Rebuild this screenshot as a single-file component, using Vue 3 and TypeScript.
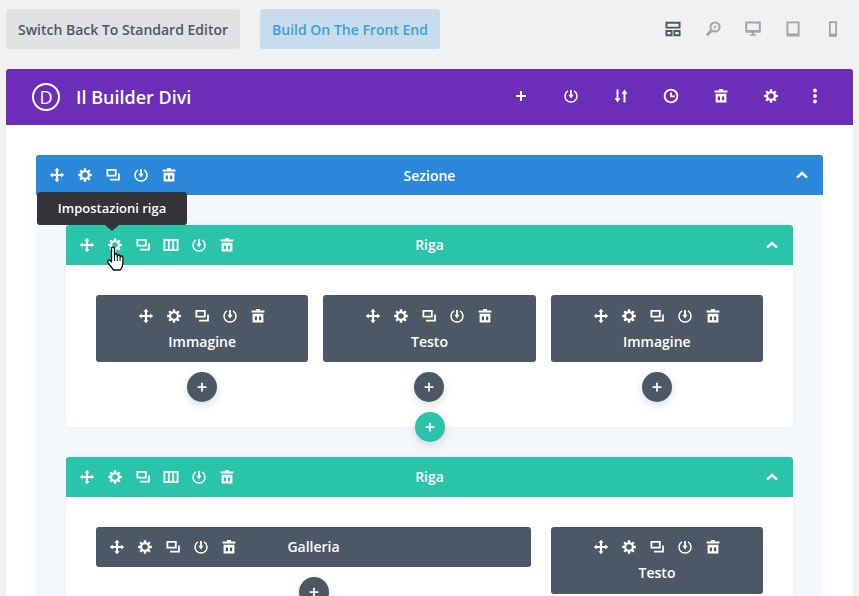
<script setup lang="ts">
import { h } from 'vue'
import type { FunctionalComponent } from 'vue'

function gearPath(): string {
  const pts: string[] = []
  const teeth = 8
  for (let i = 0; i < teeth; i++) {
    const a = (i / teeth) * Math.PI * 2 - Math.PI / 2
    const step = Math.PI / teeth
    const seq: [number, number][] = [
      [a - step * 0.42, 6.9],
      [a + step * 0.42, 6.9],
      [a + step * 0.62, 5],
      [a + step * 1.38, 5],
    ]
    for (const [an, r] of seq) {
      pts.push(`${(8 + r * Math.cos(an)).toFixed(2)} ${(8 + r * Math.sin(an)).toFixed(2)}`)
    }
  }
  return `M${pts.join('L')}Z M8 5.2a2.8 2.8 0 1 0 0 5.6a2.8 2.8 0 1 0 0-5.6Z`
}

type Shape = { d: string; stroke?: number }
const icons: Record<string, Shape[]> = {
  move: [
    { d: 'M8 3V13M3 8H13', stroke: 2.2 },
    { d: 'M8 .8L10.6 3.8H5.4ZM8 15.2L10.6 12.2H5.4ZM.8 8L3.8 5.4V10.6ZM15.2 8L12.2 5.4V10.6Z' },
  ],
  gear: [{ d: gearPath() }],
  dup: [
    { d: 'M2.4 2.9H10.8V8.7H2.4Z', stroke: 1.8 },
    { d: 'M14 6.4V12.6H5', stroke: 1.7 },
  ],
  power: [
    { d: 'M5 2.9A6 6 0 1 0 11 2.9', stroke: 1.5 },
    { d: 'M8 2V7', stroke: 1.8 },
    { d: 'M5.4 6.8H10.6L8 10.4Z' },
  ],
  trash: [
    { d: 'M6 1H10V2.6H14.4V4.6H1.6V2.6H6ZM2.6 5.8H13.4V14.4H2.6ZM4.8 8.4V12.2H7V8.4ZM9 8.4V12.2H11.2V8.4Z' },
  ],
  cols: [
    { d: 'M1.4 2.9H14.6V13.1H1.4Z', stroke: 1.8 },
    { d: 'M5.8 3V13M10.2 3V13', stroke: 1.8 },
  ],
  chevron: [{ d: 'M3 10.6L8 6L13 10.6', stroke: 2.4 }],
  plus: [{ d: 'M8 3V13M3 8H13', stroke: 2 }],
  sort: [
    { d: 'M4.5 1.5V11', stroke: 2 },
    { d: 'M1.5 10H7.5L4.5 14.5Z' },
    { d: 'M11.5 14.5V5', stroke: 2 },
    { d: 'M8.5 6H14.5L11.5 1.5Z' },
  ],
  clock: [
    { d: 'M8 1.6A6.4 6.4 0 1 0 8 14.4A6.4 6.4 0 1 0 8 1.6Z', stroke: 1.9 },
    { d: 'M8 4.4V8.4H11.8', stroke: 1.9 },
  ],
  dots: [
    {
      d: 'M8 .6a1.9 1.9 0 1 0 0 3.8a1.9 1.9 0 1 0 0-3.8ZM8 6.1a1.9 1.9 0 1 0 0 3.8a1.9 1.9 0 1 0 0-3.8ZM8 11.6a1.9 1.9 0 1 0 0 3.8a1.9 1.9 0 1 0 0-3.8Z',
    },
  ],
  layout: [
    { d: 'M1.4 1.8H14.6V6.6H1.4ZM1.4 10H6.6V14.2H1.4ZM9.4 10H14.6V14.2H9.4Z', stroke: 1.9 },
  ],
  zoom: [
    { d: 'M10 1.4A4.6 4.6 0 1 0 10 10.6A4.6 4.6 0 1 0 10 1.4Z', stroke: 2 },
    { d: 'M6.4 9.6L1.8 14.2', stroke: 3 },
    { d: 'M10 4.4V7.6M8.4 6H11.6', stroke: 1.1 },
  ],
  desktop: [
    { d: 'M1.2 1.4H14.8V10.4H1.2Z', stroke: 2 },
    { d: 'M1 9H15V11.6H1ZM7 11.6H9V13.2H11.4V14.8H4.6V13.2H7Z' },
  ],
  tablet: [
    { d: 'M2.4 1.4H13.6V14.6H2.4Z', stroke: 1.9 },
    { d: 'M3 12.4H13V15H3Z' },
  ],
  phone: [
    { d: 'M4.9 1.2H11.1V14.8H4.9Z', stroke: 1.8 },
    { d: 'M5 12.6H11V15.2H5Z' },
  ],
}

const Icon: FunctionalComponent<{ name: string }> = (props) =>
  h(
    'svg',
    { viewBox: '0 0 16 16', width: 16, height: 16, 'aria-hidden': 'true' },
    (icons[props.name] || []).map((s) =>
      s.stroke
        ? h('path', { d: s.d, fill: 'none', stroke: 'currentColor', 'stroke-width': s.stroke })
        : h('path', { d: s.d, fill: 'currentColor', 'fill-rule': 'evenodd' }),
    ),
  )
Icon.props = ['name']

const viewIcons = ['layout', 'zoom', 'desktop', 'tablet', 'phone']
const headerIcons = ['plus', 'power', 'sort', 'clock', 'trash', 'gear', 'dots']
const sectionIcons = ['move', 'gear', 'dup', 'power', 'trash']
const rowIcons = ['move', 'gear', 'dup', 'cols', 'power', 'trash']
const moduleIcons = sectionIcons

const firstRow = ['Immagine', 'Testo', 'Immagine']
</script>

<template>
  <div class="page">
    <div class="topbar">
      <button class="btn btn-grey">Switch Back To Standard Editor</button>
      <button class="btn btn-blue">Build On The Front End</button>
      <div class="views">
        <span
          v-for="(name, i) in viewIcons"
          :key="name"
          class="view"
          :class="{ active: i === 0 }"
        ><Icon :name="name" /></span>
      </div>
    </div>

    <div class="panel">
      <header class="panel-head">
        <span class="logo">D</span>
        <h1 class="panel-title">Il Builder Divi</h1>
        <div class="panel-actions">
          <span v-for="name in headerIcons" :key="name" class="panel-action"><Icon :name="name" /></span>
        </div>
      </header>

      <div class="panel-body">
        <section class="section">
          <div class="bar bar-blue">
            <div class="tools">
              <span v-for="name in sectionIcons" :key="name" class="tool"><Icon :name="name" /></span>
            </div>
            <span class="bar-title">Sezione</span>
            <span class="toggle"><Icon name="chevron" /></span>
          </div>

          <div class="section-body">
            <div class="row">
              <div class="tooltip">Impostazioni riga</div>
              <svg class="cursor" viewBox="0 0 18 25" width="18" height="25" aria-hidden="true">
                <path
                  d="M4.5 14V2.6a1.5 1.5 0 0 1 3 0V9.4a1.4 1.4 0 0 1 2.8 0V10.4a1.4 1.4 0 0 1 2.8 0V11.4a1.4 1.4 0 0 1 2.8 0V17c0 3-1 5-2.4 7H6.5L1.2 17C.3 15.8.6 14.4 1.7 14.1 2.8 13.8 3.6 14.4 4.5 16Z"
                  fill="#fff"
                  stroke="#111"
                  stroke-width="1.3"
                  stroke-linejoin="round"
                />
                <path d="M7.5 10V15M10.3 10.4V15M13.1 11.4V15" fill="none" stroke="#111" stroke-width="1" />
              </svg>
              <div class="bar bar-teal">
                <div class="tools">
                  <span v-for="name in rowIcons" :key="name" class="tool"><Icon :name="name" /></span>
                </div>
                <span class="bar-title">Riga</span>
                <span class="toggle"><Icon name="chevron" /></span>
              </div>
              <div class="row-body thirds">
                <div v-for="(title, i) in firstRow" :key="i" class="col">
                  <div class="module stacked">
                    <div class="tools">
                      <span v-for="name in moduleIcons" :key="name" class="tool"><Icon :name="name" /></span>
                    </div>
                    <span class="module-title">{{ title }}</span>
                  </div>
                  <span class="add add-dark"><Icon name="plus" /></span>
                </div>
              </div>
              <span class="add add-teal"><Icon name="plus" /></span>
            </div>

            <div class="row">
              <div class="bar bar-teal">
                <div class="tools">
                  <span v-for="name in rowIcons" :key="name" class="tool"><Icon :name="name" /></span>
                </div>
                <span class="bar-title">Riga</span>
                <span class="toggle"><Icon name="chevron" /></span>
              </div>
              <div class="row-body wide">
                <div class="col">
                  <div class="module inline">
                    <div class="tools">
                      <span v-for="name in moduleIcons" :key="name" class="tool"><Icon :name="name" /></span>
                    </div>
                    <span class="module-title">Galleria</span>
                    <span></span>
                  </div>
                  <span class="add add-dark"><Icon name="plus" /></span>
                </div>
                <div class="col">
                  <div class="module stacked">
                    <div class="tools">
                      <span v-for="name in moduleIcons" :key="name" class="tool"><Icon :name="name" /></span>
                    </div>
                    <span class="module-title">Testo</span>
                  </div>
                  <span class="add add-dark"><Icon name="plus" /></span>
                </div>
              </div>
            </div>
          </div>
        </section>
      </div>
    </div>
  </div>
</template>

<style>
html,
body {
  margin: 0;
  height: 100%;
  overflow: hidden;
  background: #f1f1f1;
}
</style>

<style scoped>
.page {
  height: 596px;
  overflow: hidden;
  box-sizing: border-box;
  padding: 9px 6px 0;
  font-family: 'Open Sans', 'Liberation Sans', sans-serif;
  font-weight: 600;
  color: #fff;
}
svg {
  display: block;
}

.topbar {
  display: flex;
  align-items: center;
  height: 40px;
  margin-bottom: 20px;
}
.btn {
  height: 40px;
  padding: 0;
  border: 0;
  border-radius: 3px;
  font: inherit;
  font-size: 14px;
  white-space: nowrap;
}
.btn-grey {
  background: #e0e2e4;
  color: #4c5866;
  width: 234px;
}
.btn-blue {
  background: #c9dcec;
  color: #3aa0dc;
  width: 180px;
  margin-left: 20px;
}
.views {
  display: flex;
  margin-left: auto;
  margin-right: 0;
}
.view {
  width: 40px;
  height: 40px;
  display: flex;
  align-items: center;
  justify-content: center;
  color: #a2a6ac;
}
.view.active {
  color: #4c5866;
}

.panel {
  background: #fff;
  border-radius: 3px 3px 0 0;
}
.panel-head {
  display: flex;
  align-items: center;
  height: 56px;
  background: #6c2eb9;
  border-radius: 3px 3px 0 0;
  padding-left: 26px;
}
.logo {
  width: 28px;
  height: 28px;
  box-sizing: border-box;
  border: 2px solid #fff;
  border-radius: 50%;
  display: flex;
  align-items: center;
  justify-content: center;
  font-size: 18px;
  font-weight: 400;
}
.panel-title {
  margin: 0 0 0 16px;
  font-size: 18px;
  font-weight: 600;
}
.panel-actions {
  display: flex;
  margin-left: auto;
  margin-right: 19px;
  margin-top: -2px;
}
.panel-action {
  width: 50px;
  display: flex;
  justify-content: center;
}
.panel-action:last-child {
  width: 38px;
}

.panel-body {
  padding: 30px;
}
.section {
  box-shadow: 0 0 10px rgba(43, 135, 218, 0.04);
}
.bar {
  display: grid;
  grid-template-columns: 1fr auto 1fr;
  align-items: center;
  height: 40px;
  border-radius: 3px 3px 0 0;
  padding: 0 7px;
}
.bar-blue {
  background: #2b87da;
}
.bar-teal {
  background: #29c4a9;
}
.bar-title,
.module-title {
  font-size: 14px;
}
.bar-teal .bar-title,
.inline .module-title {
  margin-top: -1px;
}
.toggle {
  justify-self: end;
  margin-right: 6px;
  margin-top: -1px;
}
.tools {
  display: flex;
}
.tool {
  width: 28px;
  display: flex;
  justify-content: center;
}

.section-body {
  background: #f5f8fb;
  padding: 30px 30px 30px;
  display: flex;
  flex-direction: column;
  gap: 30px;
}
.row {
  position: relative;
  box-shadow: 0 0 8px rgba(43, 135, 218, 0.06);
}
.row-body {
  background: #fff;
  padding: 30px 30px 25px;
  display: grid;
}
.thirds {
  grid-template-columns: repeat(3, 1fr);
  column-gap: 15px;
}
.wide {
  grid-template-columns: 1fr 212px;
  column-gap: 20px;
}
.col {
  display: flex;
  flex-direction: column;
  align-items: center;
}
.module {
  width: 100%;
  background: #4c5866;
  border-radius: 3px;
}
.stacked {
  height: 67px;
  display: flex;
  flex-direction: column;
  align-items: center;
  padding-top: 13px;
  box-sizing: border-box;
}
.wide .stacked {
  padding-top: 12px;
}
.stacked .module-title {
  margin-top: 8px;
  line-height: 19px;
}
.inline {
  height: 40px;
  display: grid;
  grid-template-columns: 1fr auto 1fr;
  align-items: center;
  padding: 0 7px;
  box-sizing: border-box;
}
.add {
  width: 30px;
  height: 30px;
  border-radius: 50%;
  display: flex;
  align-items: center;
  justify-content: center;
  box-shadow: 0 3px 8px rgba(43, 60, 80, 0.18);
}
.add :deep(svg) {
  width: 14px;
  height: 14px;
}
.add-dark {
  background: #4c5866;
  margin-top: 10px;
}
.add-teal {
  position: absolute;
  left: 50%;
  bottom: -15px;
  margin-left: -15px;
  background: #29c4a9;
  z-index: 1;
}

.tooltip {
  position: absolute;
  left: -29px;
  top: -33px;
  width: 150px;
  height: 33px;
  box-sizing: border-box;
  background: #333338;
  border-radius: 3px;
  font-size: 13px;
  line-height: 33px;
  text-align: center;
  z-index: 2;
}
.tooltip::after {
  content: '';
  position: absolute;
  left: 50%;
  bottom: -6px;
  margin-left: -7px;
  border: 7px solid transparent;
  border-bottom: 0;
  border-top: 6px solid #333338;
}
.cursor {
  position: absolute;
  left: 41px;
  top: 21px;
  z-index: 3;
}
</style>
